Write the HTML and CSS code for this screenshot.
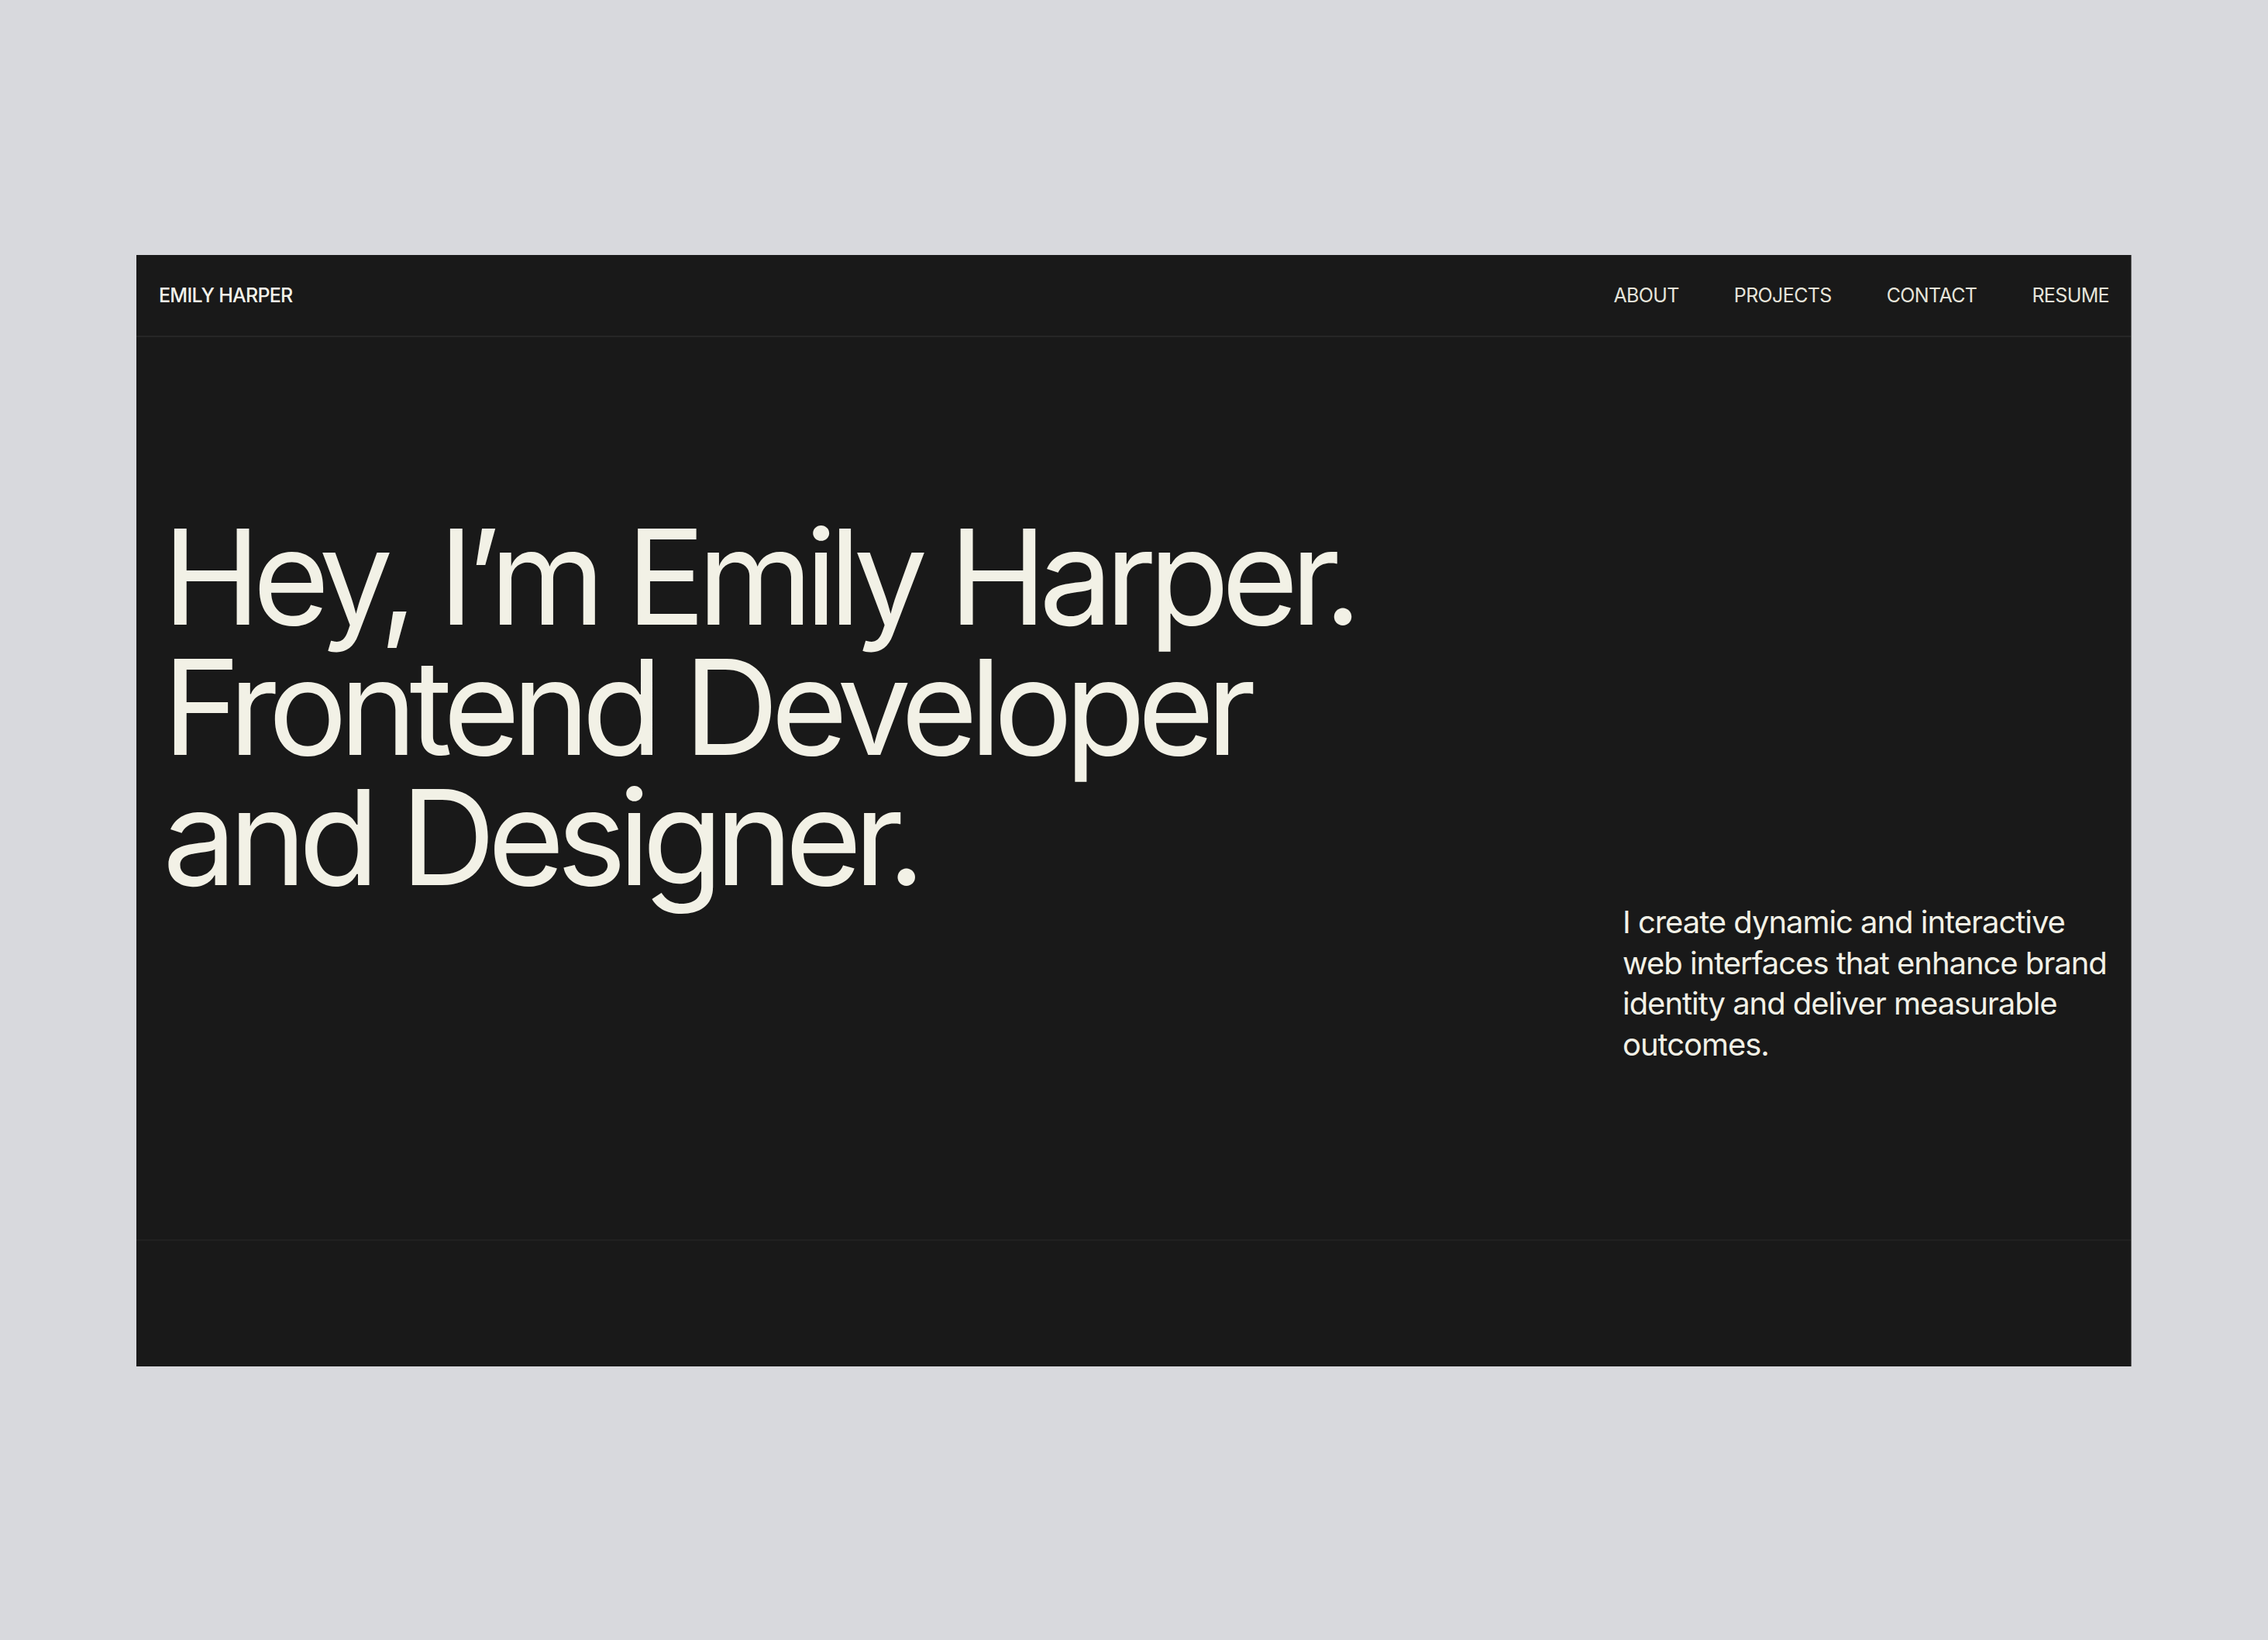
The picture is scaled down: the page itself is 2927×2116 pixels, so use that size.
FILE: index.html
```html
<!DOCTYPE html>
<html lang="en">
<head>
<meta charset="utf-8">
<title>Emily Harper — Frontend Developer</title>
<link rel="stylesheet" href="styles.css">
</head>
<body>
  <div class="frame">
    <header class="nav">
      <a class="logo" href="#">EMILY HARPER</a>
      <nav class="links">
        <a href="#">ABOUT</a>
        <a href="#">PROJECTS</a>
        <a href="#">CONTACT</a>
        <a href="#">RESUME</a>
      </nav>
    </header>
    <section class="hero">
      <h1 class="headline">Hey, I’m Emily Harper.<br>Frontend Developer<br>and Designer.</h1>
      <p class="intro">I create dynamic and interactive web interfaces that enhance brand identity and deliver measurable outcomes.</p>
    </section>
    <footer class="foot"></footer>
  </div>
</body>
</html>
```

FILE: styles.css
```css
html, body {
  margin: 0;
  padding: 0;
}
body {
  background: #d8d9dd;
  font-family: Inter, "Noto Sans", "Liberation Sans", sans-serif;
  min-height: 2116px;
}
.frame {
  width: 2574px;
  margin: 329px auto 0;
  background: #191919;
  border-right: 1px solid #6f6f6f;
  display: flex;
  flex-direction: column;
}
.nav {
  height: 104px;
  padding: 0 28px 0 29px;
  display: flex;
  align-items: center;
  justify-content: space-between;
  border-bottom: 2px solid #262626;
}
.logo {
  color: #f3f2ea;
  text-decoration: none;
  font-size: 25px;
  font-weight: 500;
  letter-spacing: -0.03em;
}
.links {
  display: flex;
  gap: 71px;
}
.links a {
  color: #e6e4da;
  text-decoration: none;
  font-size: 25px;
  font-weight: 400;
  letter-spacing: -0.025em;
}
.hero {
  height: 1164px;
  padding: 0 26px 0 34px;
  display: flex;
  flex-direction: column;
  justify-content: center;
  border-bottom: 2px solid #212121;
}
.headline {
  margin: 0;
  color: #f2f1e6;
  font-size: 170px;
  font-weight: 400;
  line-height: 168px;
  letter-spacing: -0.06em;
}
.intro {
  margin: 0;
  align-self: flex-end;
  width: 630px;
  color: #f2f1e6;
  font-size: 40px;
  line-height: 52.5px;
  letter-spacing: -0.026em;
}
.foot {
  height: 162px;
}
```
